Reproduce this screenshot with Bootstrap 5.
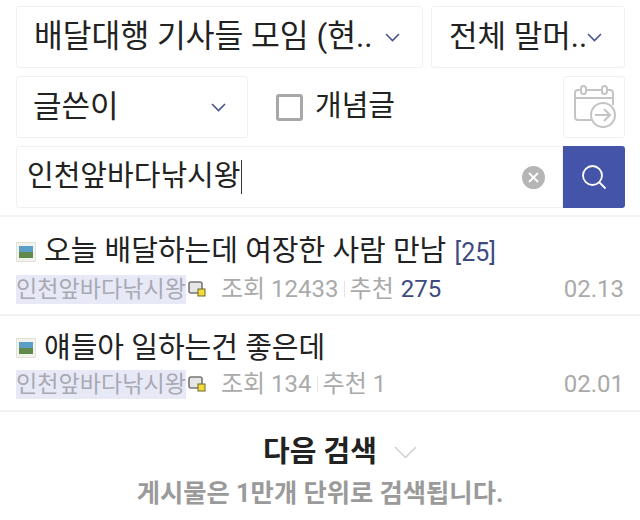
<!DOCTYPE html>
<html lang="ko">
<head>
    <meta charset="UTF-8">
    <meta name="viewport" content="width=device-width, initial-scale=1.0">
    <title>검색</title>
    <link href="https://cdn.jsdelivr.net/npm/bootstrap@5.3.0/dist/css/bootstrap.min.css" rel="stylesheet">
    <style>
        body { font-family: Roboto, "Noto Sans CJK KR", sans-serif; background: #fff; color: #222; width: 640px; height: 520px; overflow: hidden; }
        .search-area { padding: 6px 15px 7px 16px; border-bottom: 2px solid #f3f3f3; }
        .line-box { height: 62px; border: 1px solid #f1f1f1; border-radius: 3px; }
        .box-board { width: 408px; font-size: 31.300px; padding: 0 22px 0 17px; }
        .box-head { width: 194px; font-size: 31px; padding: 0 23px 0 17px; }
        .box-field { width: 232px; font-size: 31px; padding: 0 21px 0 16px; }
        .box-date { width: 62px; }
        .box-query { flex: 1; font-size: 29px; padding: 0 17px 0 10px; border-radius: 3px 0 0 3px; }
        .caret-bar { display: inline-block; width: 1px; height: 34px; background: #333; margin-left: 1px; }
        .fake-check { width: 27px; height: 27px; border: 3px solid #a8a8a8; border-radius: 3px; }
        .check-label { font-size: 29px; }
        .concept-wrap { margin-left: 28px; gap: 12px; }
        .clear-btn { width: 23px; height: 23px; border-radius: 50%; background: #b5b5b5; }
        .search-btn { width: 62px; height: 62px; background: #4454a8; border-radius: 0 3px 3px 0; }
        .post-row { height: 96px; padding: 13px 16px 0 16px; border-bottom: 2px solid #f1f1f1; }
        .post-row.first-row { height: 99px; padding-top: 15px; }
        .post-title { font-size: 29px; line-height: 38px; gap: 8px; color: #222; }
        .reply-count { font-size: 25px; color: #3d4a80; margin-left: 1px; }
        .post-meta { font-size: 24px; line-height: 30px; color: #aaa; margin-top: 2px; }
        .nick { background: #e7e9f6; color: #a9a9b4; font-size: 23.100px; height: 29px; line-height: 29px; }
        .level-icon { margin: 0 15px 0 2px; }
        .thin-sep { display: inline-block; width: 1px; height: 16px; background: #e4e4e4; margin: 0 5px; }
        .hot-num { color: #3d4a80; margin-left: 7px; }
        .more-line { font-size: 29px; font-weight: 700; color: #222; gap: 17px; padding-top: 20px; padding-left: 40px; line-height: 40px; }
        .notice-line { font-size: 25.300px; font-weight: 700; color: #9a9a9a; line-height: 32px; margin-top: 6px; }
    </style>
</head>
<body>
    <div class="search-area d-flex flex-column gap-2">
        <div class="d-flex gap-2">
            <div class="line-box box-board d-flex align-items-center justify-content-between">
                <span>배달대행 기사들 모임 (현..</span>
                <svg width="15" height="9" viewBox="0 0 15 9"><path d="M1 1l6.500 6.500L14 1" fill="none" stroke="#4a5590" stroke-width="1.600"/></svg>
            </div>
            <div class="line-box box-head d-flex align-items-center justify-content-between">
                <span class="text-nowrap">전체 말머..</span>
                <svg class="flex-shrink-0" width="15" height="9" viewBox="0 0 15 9"><path d="M1 1l6.500 6.500L14 1" fill="none" stroke="#4a5590" stroke-width="1.600"/></svg>
            </div>
        </div>
        <div class="d-flex">
            <div class="line-box box-field d-flex align-items-center justify-content-between">
                <span>글쓴이</span>
                <svg width="15" height="9" viewBox="0 0 15 9"><path d="M1 1l6.500 6.500L14 1" fill="none" stroke="#4a5590" stroke-width="1.600"/></svg>
            </div>
            <div class="concept-wrap d-flex align-items-center flex-grow-1">
                <span class="fake-check"></span>
                <span class="check-label">개념글</span>
            </div>
            <div class="line-box box-date d-flex align-items-center justify-content-center">
                <svg width="44" height="44" viewBox="0 0 44 44" fill="none" stroke="#c4c4c4" stroke-width="2">
                    <path d="M21 35H6a3 3 0 0 1-3-3V8a3 3 0 0 1 3-3h32a3 3 0 0 1 3 3v12"/>
                    <path d="M3 13h38"/>
                    <rect x="9" y="1" width="5" height="8" rx="2.500" fill="#fff"/>
                    <rect x="30" y="1" width="5" height="8" rx="2.500" fill="#fff"/>
                    <circle cx="31" cy="30" r="12" fill="#fff"/>
                    <path d="M23 30h15M32 24l6 6-6 6"/>
                </svg>
            </div>
        </div>
        <div class="d-flex">
            <div class="line-box box-query d-flex align-items-center justify-content-between">
                <span class="d-flex align-items-center">인천앞바다낚시왕<span class="caret-bar"></span></span>
                <span class="clear-btn d-flex align-items-center justify-content-center">
                    <svg width="11" height="11" viewBox="0 0 11 11"><path d="M1 1l9 9M10 1l-9 9" stroke="#fff" stroke-width="1.800"/></svg>
                </span>
            </div>
            <div class="search-btn d-flex align-items-center justify-content-center">
                <svg width="26" height="26" viewBox="0 0 26 26" fill="none" stroke="#fff" stroke-width="1.800"><circle cx="11.500" cy="11.500" r="9.500"/><path d="M18.500 18.500l6 6"/></svg>
            </div>
        </div>
    </div>

    <div class="post-row first-row">
        <div class="post-title d-flex align-items-center">
            <svg width="20" height="20" viewBox="0 0 20 20"><rect x=".5" y=".5" width="19" height="19" fill="#f3f3ee" stroke="#e2e2da"/><rect x="3" y="4" width="14" height="6" fill="#5b9fc8"/><rect x="3" y="10" width="14" height="6" fill="#5f8a4c"/></svg>
            <span>오늘 배달하는데 여장한 사람 만남 <span class="reply-count">[25]</span></span>
        </div>
        <div class="post-meta d-flex align-items-center justify-content-between">
            <div class="d-flex align-items-center">
                <span class="nick">인천앞바다낚시왕</span>
                <svg class="level-icon" width="18" height="18" viewBox="0 0 18 18"><rect x="1" y="2" width="13" height="11" rx="2" fill="#e6e6e6" stroke="#777" stroke-width="1.600"/><rect x="10" y="9" width="7" height="7" fill="#f2dc3c" stroke="#6d6a20"/></svg>
                <span>조회 12433</span><span class="thin-sep"></span><span>추천<span class="hot-num">275</span></span>
            </div>
            <span>02.13</span>
        </div>
    </div>
    <div class="post-row">
        <div class="post-title d-flex align-items-center">
            <svg width="20" height="20" viewBox="0 0 20 20"><rect x=".5" y=".5" width="19" height="19" fill="#f3f3ee" stroke="#e2e2da"/><rect x="3" y="4" width="14" height="6" fill="#5b9fc8"/><rect x="3" y="10" width="14" height="6" fill="#5f8a4c"/></svg>
            <span>얘들아 일하는건 좋은데</span>
        </div>
        <div class="post-meta d-flex align-items-center justify-content-between">
            <div class="d-flex align-items-center">
                <span class="nick">인천앞바다낚시왕</span>
                <svg class="level-icon" width="18" height="18" viewBox="0 0 18 18"><rect x="1" y="2" width="13" height="11" rx="2" fill="#e6e6e6" stroke="#777" stroke-width="1.600"/><rect x="10" y="9" width="7" height="7" fill="#f2dc3c" stroke="#6d6a20"/></svg>
                <span>조회 134</span><span class="thin-sep"></span><span>추천 1</span>
            </div>
            <span>02.01</span>
        </div>
    </div>

    <div class="more-line d-flex align-items-center justify-content-center">
        <span>다음 검색</span>
        <svg width="23" height="13" viewBox="0 0 23 13"><path d="M1 1l10.500 10.500L22 1" fill="none" stroke="#cfcfcf" stroke-width="1.500"/></svg>
    </div>
    <div class="notice-line text-center">게시물은 1만개 단위로 검색됩니다.</div>

    <script src="https://cdn.jsdelivr.net/npm/bootstrap@5.3.0/dist/js/bootstrap.bundle.min.js"></script>
</body>
</html>
